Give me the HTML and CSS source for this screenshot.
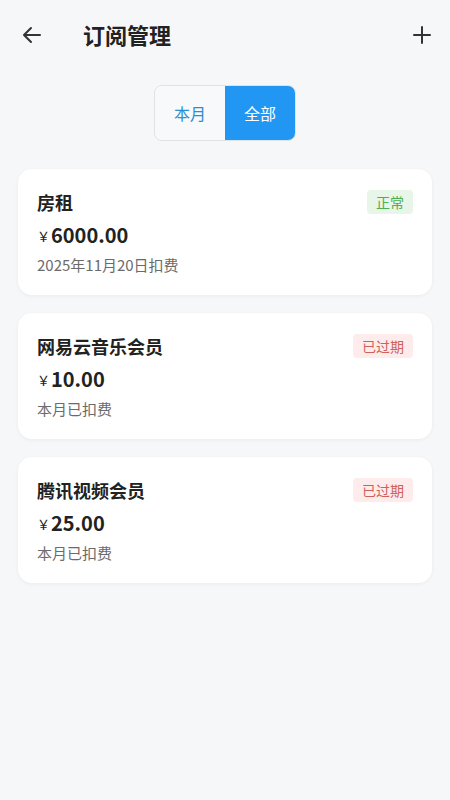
FILE: index.html
```html
<!DOCTYPE html>
<html lang="zh-CN">
<head>
<meta charset="utf-8">
<title>订阅管理</title>
<link rel="stylesheet" href="styles.css">
</head>
<body>
<div class="page">
  <header class="header">
    <button class="icon-btn back" aria-label="返回">
      <svg width="24" height="24" viewBox="0 0 24 24"><path d="M20 12H4.5M11 5l-7 7 7 7" fill="none" stroke="#333" stroke-width="2" stroke-linecap="round" stroke-linejoin="round"/></svg>
    </button>
    <h1 class="title">订阅管理</h1>
    <button class="icon-btn add" aria-label="添加">
      <svg width="20" height="20" viewBox="0 0 20 20"><path d="M10 2v16M2 10h16" fill="none" stroke="#333" stroke-width="2" stroke-linecap="round"/></svg>
    </button>
  </header>

  <div class="seg-wrap">
    <div class="seg">
      <div class="seg-item">本月</div>
      <div class="seg-item active">全部</div>
    </div>
  </div>

  <div class="list">
    <div class="card">
      <div class="row">
        <div class="name">房租</div>
        <div class="badge ok">正常</div>
      </div>
      <div class="price"><span class="yen">￥</span><span class="amount">6000.00</span></div>
      <div class="note">2025年11月20日扣费</div>
    </div>
    <div class="card">
      <div class="row">
        <div class="name">网易云音乐会员</div>
        <div class="badge expired">已过期</div>
      </div>
      <div class="price"><span class="yen">￥</span><span class="amount">10.00</span></div>
      <div class="note">本月已扣费</div>
    </div>
    <div class="card">
      <div class="row">
        <div class="name">腾讯视频会员</div>
        <div class="badge expired">已过期</div>
      </div>
      <div class="price"><span class="yen">￥</span><span class="amount">25.00</span></div>
      <div class="note">本月已扣费</div>
    </div>
  </div>
</div>
</body>
</html>
```

FILE: styles.css
```css
* { box-sizing: border-box; }
html, body { margin: 0; padding: 0; }
body {
  background: #f6f7f9;
  font-family: "Noto Sans CJK SC", "Noto Sans", sans-serif;
  color: #222;
  width: 450px;
  min-height: 800px;
}
.page { display: flex; flex-direction: column; }
.header {
  height: 70px;
  display: flex;
  align-items: center;
  padding: 0 18px 0 20px;
}
.icon-btn {
  background: none;
  border: 0;
  padding: 0;
  width: 24px;
  height: 24px;
  display: flex;
  align-items: center;
  justify-content: center;
}
.back svg { width: 24px; height: 24px; }
.title {
  margin: -3px 0 0 39px;
  font-size: 22px;
  font-weight: 700;
  line-height: 30px;
  flex: 1;
  color: #222;
}
.add { width: 20px; height: 20px; }
.seg-wrap {
  display: flex;
  justify-content: center;
  margin-top: 15px;
}
.seg {
  display: flex;
  height: 56px;
  border-radius: 8px;
  overflow: hidden;
  border: 1px solid #dfe3e8;
}
.seg-item {
  width: 70px;
  display: flex;
  align-items: center;
  justify-content: center;
  font-size: 16px;
  color: #2c8fd1;
  background: #f8f9fb;
}
.seg-item.active {
  background: #2196f3;
  color: #fff;
}
.list {
  display: flex;
  flex-direction: column;
  gap: 18px;
  padding: 28px 18px 0;
}
.card {
  background: #fff;
  border-radius: 14px;
  padding: 21px 19px 19px;
  box-shadow: 0 1px 4px rgba(0,0,0,0.05);
  display: flex;
  flex-direction: column;
}
.row {
  display: flex;
  justify-content: space-between;
  align-items: center;
  height: 24px;
}
.name {
  font-size: 18px;
  font-weight: 700;
  line-height: 24px;
  color: #222;
}
.badge {
  height: 24px;
  line-height: 24px;
  padding: 0 9px;
  font-size: 14px;
  border-radius: 4px;
}
.badge.ok { background: #e8f5e9; color: #4caf50; }
.badge.expired { background: #fdeceb; color: #d0605a; }
.price {
  margin-top: 6px;
  height: 28px;
  display: flex;
  align-items: center;
}
.yen {
  font-size: 13px;
  color: #222;
  margin-right: 1px;
  margin-top: 3px;
}
.amount {
  font-size: 20px;
  font-weight: 700;
  color: #222;
}
.note {
  margin-top: 6px;
  font-size: 15px;
  line-height: 22px;
  color: #6b6b6b;
}
```
